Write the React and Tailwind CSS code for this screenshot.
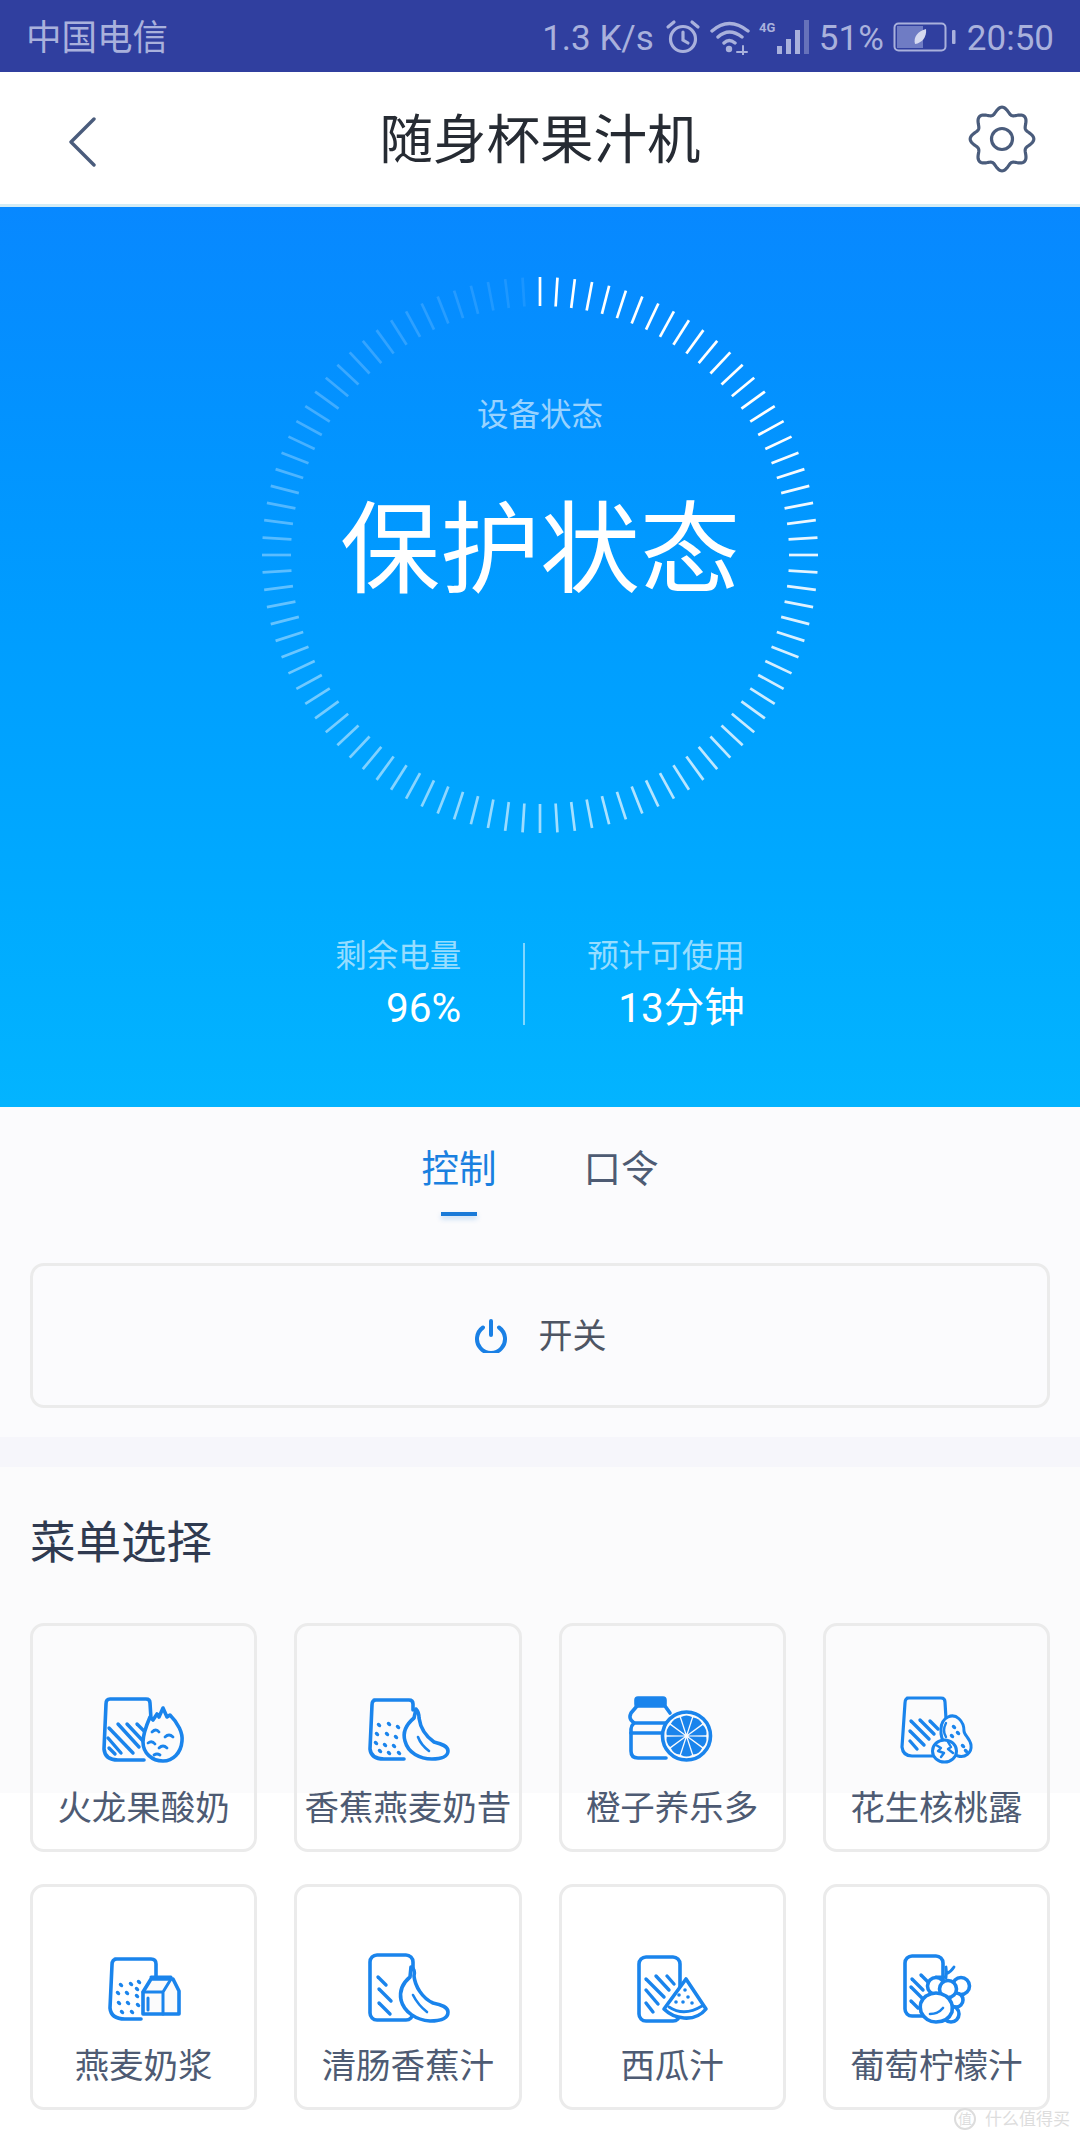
import React from "react";

const B = "#1a84ec";
const BG1 = "#fbfbfc";

function Ring() {
  const ticks = [];
  for (let i = 0; i < 100; i++) {
    const a = i * 3.6;
    const rad = (a * Math.PI) / 180;
    const op = a <= 60 ? 1 : 1 - ((a - 60) / 300) * 0.93;
    ticks.push(
      <line key={i} x1={280 + Math.sin(rad) * 249} y1={280 - Math.cos(rad) * 249} x2={280 + Math.sin(rad) * 278} y2={280 - Math.cos(rad) * 278} stroke="#fff" strokeWidth="2.7" opacity={op} />
    );
  }
  return <svg width="560" height="560" viewBox="0 0 560 560" className="absolute left-[260px] top-[68px]">{ticks}</svg>;
}

function Gear() {
  const pts = [];
  for (let i = 0; i < 240; i++) {
    const t = (i / 240) * Math.PI * 2;
    const r = 28.6 + 3.2 * Math.cos(8 * t);
    pts.push(`${(34 + Math.sin(t) * r).toFixed(2)},${(34 - Math.cos(t) * r).toFixed(2)}`);
  }
  return (
    <svg width="68" height="68" viewBox="0 0 68 68" fill="none" stroke="#4a5c7c" strokeWidth="3.2" strokeLinejoin="round" className="absolute left-[968px] top-[33px]">
      <polygon points={pts.join(" ")} />
      <circle cx="34" cy="34" r="10.500" />
    </svg>
  );
}

const Stripes = ({ lines }) => (
  <g stroke={B} strokeWidth="3.4" strokeLinecap="round" fill="none">
    {lines.map((l, i) => <line key={i} x1={l[0]} y1={l[1]} x2={l[2]} y2={l[3]} />)}
  </g>
);

const Dots = ({ pts }) => (
  <g fill={B} stroke="none">
    {pts.map((p, i) => <ellipse key={i} cx={p[0]} cy={p[1]} rx="2.6" ry="1.8" transform={`rotate(45 ${p[0]} ${p[1]})`} />)}
  </g>
);

const Svg = ({ children }) => (
  <svg width="100" height="76" viewBox="0 0 100 76" fill="none" stroke={B} strokeWidth="3.6" strokeLinejoin="round" strokeLinecap="round" className="shrink-0">
    {children}
  </svg>
);

const I1 = () => (
  <Svg>
    <path d="M16 8H52Q56 8 56 12L57 28M50 69H24Q11 69 10 58L12 13Q12 8 16 8" />
    <Stripes lines={[[24,33,45,56],[33,33,49,50],[43,33,51,41],[15,37,39,62],[14,47,27,62],[15,57,21,63]]} />
    <path d="M69 17L73 26L76 24C84 32 89 42 88 50C87 62 79 70 69 70C58 70 49 62 49 51C49 43 53 33 56 26L59 29L63 23L65 26Z" fill={BG1} />
    <path d="M58 41Q62 37 65 41M71 46Q75 42 79 46M54 52Q58 49 61 53M65 57Q69 53 73 57M60 64Q63 62 66 64" strokeWidth="2.8" />
  </Svg>
);

const I2 = () => (
  <Svg>
    <path d="M16 9H51Q55 9 55 13L55 19M46 68H26Q13 68 12 58L14 14Q14 9 18 9" />
    <Dots pts={[[21,34],[31,33],[40,36],[19,43],[29,43],[38,46],[18,52],[27,54],[36,55],[22,60],[31,62],[41,62]]} />
    <path d="M58 18C60 20 61 24 61 27C62 34 66 44 76 51C84 53 90 55 90 60C90 65 84 68 74 68C62 68 50 62 47 50C44 40 50 32 56 27Z" fill={BG1} />
    <path d="M60 46Q63 54 71 60" strokeWidth="2.6" />
  </Svg>
);

const I3 = () => (
  <Svg>
    <rect x="14" y="7" width="29" height="8" rx="2" fill={B} />
    <path d="M15 15L9 22Q7 26 9 29L12 32Q9 35 9 38V60Q9 67 16 67H44M43 15L48 22" />
    <path d="M12 32H45M9 42H41" />
    <circle cx="64.500" cy="45" r="24" fill={BG1} />
    {[0,1,2,3,4,5,6,7,8,9].map((i) => (
      <path key={i} d="M64.500 43L59 26Q64.500 23 70 26Z" fill={B} stroke="none" transform={`rotate(${i * 36} 64.5 45)`} />
    ))}
  </Svg>
);

const I4 = () => (
  <Svg>
    <path d="M21 7H55Q59 7 59 11L60 28M48 65H26Q17 65 16 56L19 12Q19 7 23 7" strokeWidth="3.2" />
    <Stripes lines={[[25,30,43,48],[34,29,48,43],[44,30,52,38],[24,40,38,54],[24,50,31,58]]} />
    <path d="M62 26C70 22 78 30 78 40C78 44 84 47 85 54C86 62 79 67 72 65C63 63 54 50 55 38C55 32 58 28 62 26Z" fill={BG1} strokeWidth="3" />
    <path d="M60 32Q56 40 60 46" strokeWidth="2.4" />
    <ellipse cx="58.500" cy="60" rx="12" ry="11" fill={BG1} strokeWidth="3" />
    <path d="M50 54L55 57L52 60L58 62L55 66M62 51L65 56L62 58L67 62" strokeWidth="2.4" />
    <Dots pts={[[68,36],[72,42],[66,45],[77,55],[80,60]]} />
  </Svg>
);

const I5 = () => (
  <Svg>
    <path d="M21 7H57Q62 7 62 12V26M47 67H31Q17 67 16 56L18 13Q18 7 23 7" />
    <Dots pts={[[27,33],[37,32],[45,30],[24,41],[33,41],[43,37],[25,51],[34,51],[43,44],[28,60],[38,60],[44,53]]} />
    <path d="M49 62V40L57 27H79L85 39V62Z" fill={BG1} />
    <path d="M57 25H77V27M49 40H69V62M69 40L77 27M54 46V58" strokeWidth="3" />
  </Svg>
);

const I6 = () => (
  <Svg>
    <rect x="12" y="3" width="43" height="65" rx="7" />
    <Stripes lines={[[20,25,28,33],[21,37,33,49],[21,51,32,62]]} />
    <path d="M53 15C56 16 57 20 56 24C57 34 64 46 75 51C84 53 90 55 90 60C90 66 84 69 72 69C58 68 46 60 43 48C41 38 46 30 52 25Z" fill="#fff" />
    <path d="M55 43Q60 53 69 60" strokeWidth="2.6" />
  </Svg>
);

const I7 = () => (
  <Svg>
    <rect x="17" y="5" width="41" height="64" rx="7" />
    <Stripes lines={[[24,27,42,45],[34,24,47,38],[45,24,52,32],[24,38,36,52],[24,51,31,60]]} />
    <path d="M64 27L84 57Q76 67 62 66Q50 65 42 57Z" fill="#fff" />
    <path d="M47 55Q62 65 80 54" strokeWidth="2.8" />
    <g fill={B} stroke="none">
      {[[63,38],[57,43],[66,45],[61,50],[70,51],[54,50]].map((p, i) => <circle key={i} cx={p[0]} cy={p[1]} r="1.8" />)}
    </g>
  </Svg>
);

const I8 = () => (
  <Svg>
    <rect x="19" y="4" width="38" height="60" rx="7" />
    <Stripes lines={[[26,27,37,38],[25,35,38,48],[25,49,32,56],[35,23,42,30]]} />
    <circle cx="75" cy="34" r="8.500" fill="#fff" />
    <circle cx="70" cy="48" r="7" fill="#fff" />
    <circle cx="65" cy="62" r="8" fill="#fff" />
    <circle cx="50" cy="34" r="8.500" fill="#fff" />
    <circle cx="62" cy="37" r="8.500" fill="#fff" />
    <path d="M35 60Q32 50 40 44Q50 38 60 44Q68 50 66 60Q62 70 50 70Q40 70 35 60Z" fill="#fff" />
    <path d="M44 62Q52 62 57 56" strokeWidth="2.6" />
    <path d="M60 26Q61 20 60 15M60 22Q65 20 68 15M50 25H60" strokeWidth="2.8" />
  </Svg>
);

function Card({ label, icon, h, gap }) {
  return (
    <div className={`${h} rounded-[14px] border-[3px] border-[#ebebeb] flex flex-col items-center pt-[65px]`}>
      {icon}
      <div className={`${gap} text-[34.5px] leading-[40px] text-[#4e5b73] whitespace-nowrap`}>{label}</div>
    </div>
  );
}

export default function App() {
  const row1 = [["火龙果酸奶", <I1 />], ["香蕉燕麦奶昔", <I2 />], ["橙子养乐多", <I3 />], ["花生核桃露", <I4 />]];
  const row2 = [["燕麦奶浆", <I5 />], ["清肠香蕉汁", <I6 />], ["西瓜汁", <I7 />], ["葡萄柠檬汁", <I8 />]];
  return (
    <div className="relative w-[1080px] h-[2142px] overflow-hidden bg-white font-['Roboto','Noto_Sans_CJK_SC',sans-serif]">
      {/* status bar */}
      <div className="h-[72px] bg-[#303f9f] flex items-center pl-[26px] pr-[26px] pt-[2px] text-[#a9b1dc]">
        <span className="pt-[3px] text-[35.5px] leading-none">中国电信</span>
        <div className="ml-auto flex items-center">
          <span className="pt-[3px] text-[35px] leading-none">1.3 K/s</span>
          <svg width="36" height="36" viewBox="0 0 36 36" fill="none" stroke="#a9b1dc" strokeWidth="3.2" strokeLinecap="round" className="ml-[11px]">
            <circle cx="18" cy="20" r="12.500" />
            <path d="M18 13V21L23 24M3 8L9 3M33 8L27 3" />
          </svg>
          <svg width="40" height="36" viewBox="0 0 40 36" fill="none" stroke="#a9b1dc" strokeWidth="3.4" strokeLinecap="round" className="ml-[9px]">
            <path d="M2 12Q19 -3 38 12M8 18Q19 8 32 18M14 24Q19 19 25 24" />
            <circle cx="19" cy="30" r="3.200" fill="#a9b1dc" stroke="none" />
            <path d="M27 33H37M33 27V36" strokeWidth="2" />
          </svg>
          <svg width="54" height="34" viewBox="0 0 54 34" className="ml-[8px]" fill="#a9b1dc">
            <text x="1" y="12" fontSize="13" fontWeight="700" fontFamily="Roboto">4G</text>
            <rect x="19" y="26" width="5" height="8" />
            <rect x="28" y="19" width="5" height="15" />
            <rect x="37" y="10" width="5" height="24" />
            <rect x="46" y="0" width="5" height="34" opacity="0.45" />
          </svg>
          <span className="ml-[7px] pt-[3px] text-[35px] leading-none">51%</span>
          <svg width="64" height="30" viewBox="0 0 64 30" fill="none" className="ml-[9px]">
            <rect x="1.500" y="1.500" width="51" height="27" rx="4" stroke="#a9b1dc" strokeWidth="2" />
            <rect x="4" y="4" width="26" height="22" fill="#6f7cc4" />
            <path d="M22 22C20 15 25 9 33 7C34 15 29 21 22 22Z" fill="#d5d9f0" />
            <rect x="59" y="8" width="3.500" height="14" rx="1" fill="#a9b1dc" />
          </svg>
          <span className="ml-[10px] pt-[3px] text-[35px] leading-none">20:50</span>
        </div>
      </div>

      {/* nav */}
      <div className="relative h-[135px] bg-white border-b-[3px] border-[#d4ecf5] flex items-center justify-center">
        <svg width="30" height="50" viewBox="0 0 30 50" fill="none" stroke="#4a5c7c" strokeWidth="3.4" strokeLinecap="round" strokeLinejoin="round" className="absolute left-[67px] top-[45px]">
          <path d="M27 2L4 25L27 48" />
        </svg>
        <span className="pt-[6px] text-[53.5px] leading-none text-[#262b33]">随身杯果汁机</span>
        <Gear />
      </div>

      {/* hero */}
      <div className="relative h-[900px] bg-gradient-to-b from-[#0888ff] to-[#03b4ff] flex flex-col items-center">
        <Ring />
        <div className="relative mt-[191px] text-[31.5px] leading-[36px] text-white/60">设备状态</div>
        <div className="relative mt-[57px] text-[100px] leading-[120px] text-white">保护状态</div>
        <div className="relative mt-[328px] flex justify-center gap-[62px] text-right">
          <div>
            <div className="text-[31.5px] leading-[36px] text-white/60">剩余电量</div>
            <div className="mt-[9px] text-[40.5px] leading-[48px] text-white">96%</div>
          </div>
          <div className="mt-[4px] w-[2px] h-[82px] bg-white/50" />
          <div>
            <div className="text-[31.5px] leading-[36px] text-white/60">预计可使用</div>
            <div className="mt-[9px] text-[40.5px] leading-[48px] text-white">13分钟</div>
          </div>
        </div>
      </div>

      {/* controls */}
      <div className="h-[330px] bg-[#fbfbfd] px-[30px] pt-[41px]">
        <div className="flex justify-center gap-[87px] text-[37.5px] leading-[42px]">
          <div className="flex flex-col items-center">
            <span className="text-[#1a80e0]">控制</span>
            <div className="mt-[22px] w-[36px] h-[4px] bg-[#1a7ad8] shadow-[0_3px_5px_rgba(26,122,216,0.25)]" />
          </div>
          <span className="text-[#4e5b73]">口令</span>
        </div>
        <div className="mt-[47px] h-[145px] rounded-[14px] border-[3px] border-[#ebebeb] flex items-center justify-center gap-[31px]">
          <svg width="34" height="34" viewBox="0 0 34 34" fill="none" stroke="#1a80e5" strokeWidth="4" strokeLinecap="round">
            <path d="M17 2V16M9 8.500A14 14 0 1 0 25 8.500" />
          </svg>
          <span className="text-[34px] leading-none text-[#4e5563]">开关</span>
        </div>
      </div>

      <div className="h-[30px] bg-[#f6f6fb]" />

      {/* menu */}
      <div className="h-[675px] bg-[linear-gradient(#fbfbfc_326px,#ffffff_326px)] px-[30px] pt-[51px]">
        <div className="text-[45.5px] leading-[52px] text-[#2f3a50]">菜单选择</div>
        <div className="mt-[53px] grid grid-cols-4 gap-x-[37px] gap-y-[32px]">
          {row1.map(([l, i]) => <Card key={l} label={l} icon={i} h="h-[229px]" gap="mt-[21px]" />)}
          {row2.map(([l, i]) => <Card key={l} label={l} icon={i} h="h-[226px]" gap="mt-[18px]" />)}
        </div>
      </div>

      {/* watermark */}
      <div className="absolute left-[954px] top-[2108px] flex items-center gap-[9px] text-[#dddddd]">
        <div className="w-[22px] h-[22px] rounded-full border-2 border-[#dddddd] flex items-center justify-center text-[14px] leading-none">值</div>
        <span className="text-[17px] leading-none whitespace-nowrap">什么值得买</span>
      </div>
    </div>
  );
}
